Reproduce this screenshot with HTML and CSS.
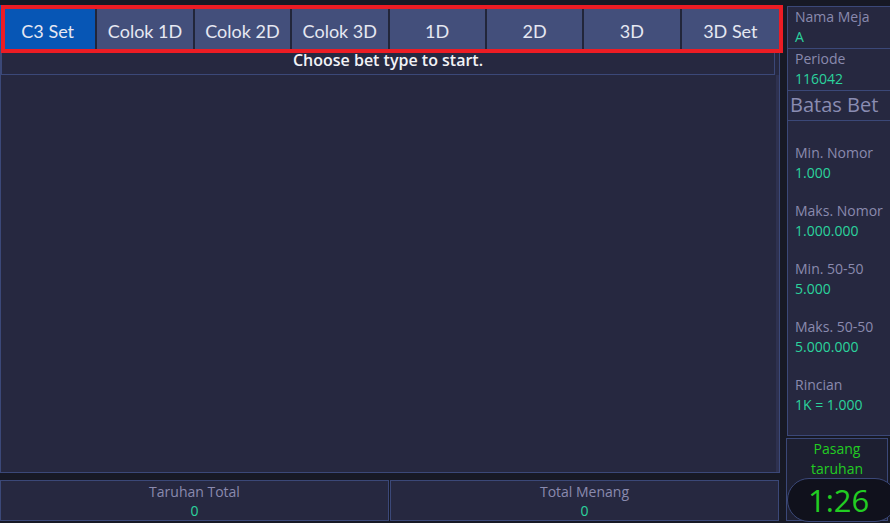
FILE: index.html
```html
<!DOCTYPE html>
<html>
<head>
<meta charset="utf-8">
<link rel="stylesheet" href="styles.css">
</head>
<body>
<div class="app">
  <div class="left">
    <div class="main">
      <div class="tabs">
        <div class="tab active">C3 Set</div>
        <div class="tab">Colok 1D</div>
        <div class="tab">Colok 2D</div>
        <div class="tab">Colok 3D</div>
        <div class="tab">1D</div>
        <div class="tab">2D</div>
        <div class="tab">3D</div>
        <div class="tab">3D Set</div>
      </div>
      <div class="hint">Choose bet type to start.</div>
      <div class="content">
        <div class="area"></div>
        <div class="scroll"></div>
      </div>
      <div class="highlight"></div>
    </div>
    <div class="totals">
      <div class="total">
        <div class="label">Taruhan Total</div>
        <div class="value">0</div>
      </div>
      <div class="total">
        <div class="label">Total Menang</div>
        <div class="value">0</div>
      </div>
    </div>
  </div>
  <div class="right">
    <div class="info">
      <div class="field">
        <div class="label">Nama Meja</div>
        <div class="value">A</div>
      </div>
      <div class="field">
        <div class="label">Periode</div>
        <div class="value">116042</div>
      </div>
      <div class="heading">Batas Bet</div>
      <div class="limits">
        <div class="limit"><div class="label">Min. Nomor</div><div class="value">1.000</div></div>
        <div class="limit"><div class="label">Maks. Nomor</div><div class="value">1.000.000</div></div>
        <div class="limit"><div class="label">Min. 50-50</div><div class="value">5.000</div></div>
        <div class="limit"><div class="label">Maks. 50-50</div><div class="value">5.000.000</div></div>
        <div class="limit"><div class="label">Rincian</div><div class="value">1K = 1.000</div></div>
      </div>
    </div>
    <div class="timerbox">
      <div class="status">Pasang<br>taruhan</div>
      <div class="timer">1:26</div>
    </div>
  </div>
</div>
</body>
</html>
```

FILE: styles.css
```css
* { box-sizing: border-box; }
html, body {
  margin: 0;
  padding: 0;
  background: #171925;
  width: 890px;
  height: 523px;
  overflow: hidden;
  font-family: "Open Sans", "Noto Sans", sans-serif;
}
.app {
  display: flex;
  gap: 7px;
  height: 523px;
}
.left {
  width: 780px;
  display: flex;
  flex-direction: column;
  padding-top: 5px;
  gap: 7px;
}
.main {
  position: relative;
  height: 468px;
  border: 1px solid #3b4878;
  border-top: none;
  background: #262840;
  display: flex;
  flex-direction: column;
}
.tabs {
  display: grid;
  grid-template-columns: repeat(8, 1fr);
  height: 44px;
  width: 779px;
  margin-left: -1px;
}
.tab {
  background: #434f7b;
  color: #e6e8f2;
  font-family: "Lato", sans-serif;
  font-size: 18px;
  display: flex;
  align-items: center;
  justify-content: center;
  border-right: 2px solid #22263a;
  padding-top: 7px;
}
.tab:last-child { border-right: none; }
.tab.active { background: #0756b5; }
.hint {
  width: 774px;
  height: 26px;
  border: 1px solid #3b4878;
  border-top: none;
  color: #f2f2f6;
  font-size: 16px;
  font-weight: 600;
  text-align: center;
  line-height: 22px;
  padding-top: 0;
}
.content {
  flex: 1;
  display: flex;
}
.area { flex: 1; }
.scroll {
  width: 3px;
  background: #2e3150;
}
.highlight {
  position: absolute;
  left: 0;
  top: 0;
  width: 782px;
  height: 48px;
  border: 4px solid #ec1c24;
  pointer-events: none;
}
.totals {
  display: flex;
  gap: 1px;
  height: 41px;
  width: 779px;
}
.total {
  flex: 1;
  border: 1px solid #3b4878;
  background: #262840;
  text-align: center;
  font-size: 14px;
  padding-top: 2px;
}
.total .label { color: #8a8aae; line-height: 18px; }
.total .value { color: #2bd39d; line-height: 19px; }
.right {
  width: 103px;
  display: flex;
  flex-direction: column;
  padding-top: 6px;
  gap: 2px;
}
.info {
  height: 430px;
  border: 1px solid #3b4878;
  border-right: none;
  background: #262840;
  display: flex;
  flex-direction: column;
}
.label { color: #8a8aae; }
.value { color: #2bd39d; }
.field {
  height: 42px;
  border-bottom: 1px solid #3b4878;
  padding: 0 0 0 7px;
  font-size: 14px;
  line-height: 20px;
}
.heading {
  height: 30px;
  border-bottom: 1px solid #3b4878;
  color: #8a8cb2;
  font-size: 20px;
  line-height: 28px;
  padding-left: 2px;
}
.limits {
  display: flex;
  flex-direction: column;
  padding: 22px 0 0 7px;
  gap: 19px;
  font-size: 14px;
  line-height: 19.5px;
}
.timerbox {
  position: relative;
  height: 83px;
  width: 102px;
  margin-left: -1px;
  border: 1px solid #3b4878;
  background: #1d1f31;
  display: flex;
  flex-direction: column;
  align-items: center;
}
.status {
  color: #22cc22;
  font-size: 14px;
  line-height: 20px;
  text-align: center;
  padding-top: 0;
}
.timer {
  position: absolute;
  left: 0;
  top: 39px;
  width: 110px;
  height: 44px;
  border: 1px solid #3b4878;
  border-radius: 22px;
  background: #10111c;
  color: #22cc22;
  font-size: 31px;
  line-height: 42px;
  padding-left: 20px;
}
```
